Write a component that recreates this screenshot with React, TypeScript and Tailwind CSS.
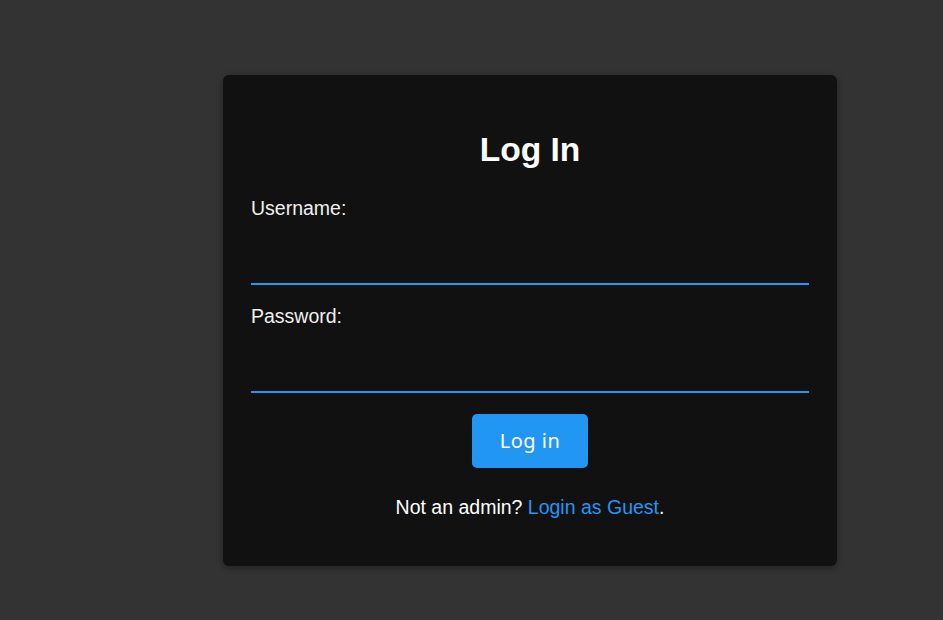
export default function App() {
  return (
    <div className="min-h-[620px] bg-[#333333] pt-[75px] pl-[223px] font-['Liberation_Sans',Arial,sans-serif]">
      <div className="w-[614px] rounded-md bg-[#111111] px-[28px] pt-[56px] pb-[47px] shadow-[0_2px_6px_rgba(0,0,0,0.35)]">
        <h1 className="text-center text-[33.6px] leading-[38px] font-bold text-white">Log In</h1>
        <form className="mt-[28px]" onSubmit={(e) => e.preventDefault()}>
          <label className="block text-[19.5px] leading-[23px] text-[#f0f0f0]">
            Username:
            <input
              type="text"
              className="mt-[14px] block h-[51px] w-full border-b-2 border-[#2196f3] bg-transparent text-white outline-none"
            />
          </label>
          <label className="mt-[20px] block text-[19.5px] leading-[23px] text-[#f0f0f0]">
            Password:
            <input
              type="password"
              className="mt-[14px] block h-[51px] w-full border-b-2 border-[#2196f3] bg-transparent text-white outline-none"
            />
          </label>
          <div className="mt-[21px] flex justify-center">
            <button
              type="submit"
              className="h-[54px] w-[116px] rounded-[5px] bg-[#2196f3] font-['Noto_Sans',sans-serif] text-[20px] tracking-[0.5px] text-white"
            >
              Log in
            </button>
          </div>
        </form>
        <p className="mt-[28px] text-center text-[19.5px] leading-[23px] text-white">
          Not an admin? <a href="#" className="text-[#2196f3]">Login as Guest</a>.
        </p>
      </div>
    </div>
  );
}
